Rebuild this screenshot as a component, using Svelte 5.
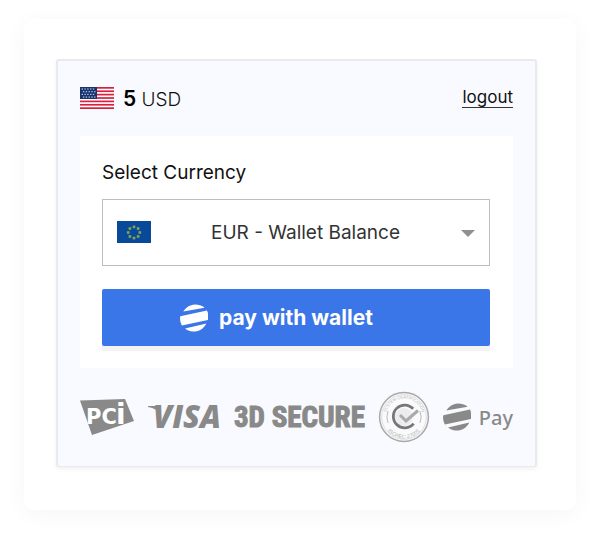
<script>
  let currency = $state('EUR');
  const stripes = [0, 2, 4, 6, 8, 10, 12];
  const unionRows = [0, 1, 2, 3];
  const unionCols = [0, 1, 2, 3, 4];
  const euStars = [0, 1, 2, 3, 4, 5, 6, 7].map((i) => ({
    x: 17 + 5.8 * Math.cos((i * Math.PI) / 4),
    y: 11.5 + 5.6 * Math.sin((i * Math.PI) / 4)
  }));
</script>

{#snippet globe()}
  <path d="M3.2 7.6A14 14 0 0 1 20 1.3Q23 2.2 24.6 3.8Z" />
  <path d="M.3 12.2L27 6.4A14 14 0 0 1 27.9 16L1.8 21.6A14 14 0 0 1 .3 12.2Z" />
  <path d="M5 24.4L26.4 19.6A14 14 0 0 1 5 24.4Z" />
{/snippet}

<main class="card">
  <section class="checkout">
    <header>
      <div class="amount">
        <svg class="flag" viewBox="0 0 34 22" role="img" aria-label="United States">
          <rect width="34" height="22" fill="#fff" />
          {#each stripes as s}
            <rect y={(s * 22) / 13} width="34" height="1.7" fill="#d5213f" />
          {/each}
          <rect width="17" height="12" fill="#17346f" />
          {#each unionRows as r}
            {#each unionCols as c}
              <rect x={1.6 + c * 2.8 + (r % 2) * 1.3} y={1.4 + r * 2.7} width="1.4" height="1.2" fill="#b9c4dc" />
            {/each}
          {/each}
        </svg>
        <span><strong>5</strong> USD</span>
      </div>
      <a href="#logout">logout</a>
    </header>

    <form class="wallet" onsubmit={(e) => e.preventDefault()}>
      <label for="currency">Select Currency</label>
      <div class="picker">
        <select id="currency" bind:value={currency}>
          <option value="EUR">EUR - Wallet Balance</option>
        </select>
        <svg class="flag picker-flag" viewBox="0 0 34 22" aria-hidden="true">
          <rect width="34" height="22" fill="#084a99" />
          {#each euStars as star}
            <rect x={star.x - 1.3} y={star.y - 1.3} width="2.6" height="2.6" fill="#86a84c" />
          {/each}
        </svg>
        <svg class="caret" viewBox="0 0 14 7" aria-hidden="true"><path d="M0 0H14L7 7Z" /></svg>
      </div>
      <button type="submit">
        <svg class="globe" viewBox="0 0 28 28" aria-hidden="true">{@render globe()}</svg>
        pay with wallet
      </button>
    </form>

    <footer>
      <svg class="pci" viewBox="0 0 54 36" role="img" aria-label="PCI">
        <path d="M0 1.5L45 0L54 22L12 36Z" />
        <text x="6" y="25" font-size="21">PC</text>
        <text x="36" y="25" font-size="28">i</text>
      </svg>
      <svg class="visa" viewBox="0 0 74 32" role="img" aria-label="VISA">
        <path d="M1 5H10L13 12Q8 7 1 6Z" />
        <text x="6" y="27" font-size="31">VISA</text>
      </svg>
      <span class="secure">3D SECURE</span>
      <svg class="seal" viewBox="0 0 52 52" role="img" aria-label="ISO/IEC 27001 certified">
        <defs>
          <path id="seal-top" d="M7.5 26A18.5 18.5 0 0 1 44.5 26" />
          <path id="seal-bottom" d="M4.5 26A21.5 21.5 0 0 0 47.5 26" />
        </defs>
        <circle cx="26" cy="26" r="24.4" fill="#fafafc" stroke="#aaa" stroke-width="1.5" />
        <circle cx="26" cy="26" r="22.3" fill="none" stroke="#ccc" stroke-width=".6" />
        <path d="M10 20A17 17 0 0 0 10 32M42 20A17 17 0 0 1 42 32" fill="none" stroke="#b4b4b4" stroke-width=".9" />
        <text font-size="4" text-anchor="middle"><textPath href="#seal-top" startOffset="50%">SYSTEM CERTIFICATION</textPath></text>
        <text font-size="5.5" text-anchor="middle"><textPath href="#seal-bottom" startOffset="50%">ISO/IEC 27001</textPath></text>
        <circle cx="26" cy="26" r="9" fill="#ececee" />
        <path d="M35.2 17.8A11.4 11.4 0 1 0 35.6 32.6" fill="none" stroke="#777" stroke-width="2.8" />
        <path d="M22 24L28 30L40 19.5" fill="none" stroke="#aaa" stroke-width="3" />
      </svg>
      <div class="pay">
        <svg class="globe" viewBox="0 0 28 28" aria-hidden="true">{@render globe()}</svg>
        <span>Pay</span>
      </div>
    </footer>
  </section>
</main>

<style>
  :global(body) {
    margin: 0;
    background: #fff;
  }
  .card,
  .card * {
    box-sizing: border-box;
  }
  .card {
    margin: 19px 24px 28px;
    padding: 40px 39px 43px 32px;
    border-radius: 10px;
    background: #fff;
    box-shadow: 0 4px 24px rgba(0, 0, 0, 0.04);
    font-family: Inter, "Noto Sans", sans-serif;
    color: #111;
  }
  .checkout {
    padding: 22px 22px 23px;
    border: 2px solid #e8eaee;
    border-bottom-width: 1px;
    border-radius: 3px;
    background: #f9faff;
    box-shadow: 0 2px 4px rgba(0, 0, 0, 0.06);
  }
  header,
  .amount,
  footer,
  .pay {
    display: flex;
    align-items: center;
  }
  header {
    justify-content: space-between;
    height: 30px;
  }
  .amount {
    gap: 9px;
    font-size: 19px;
    font-weight: 300;
  }
  strong {
    font-size: 21px;
    font-weight: 600;
    color: #000;
  }
  .flag {
    width: 34px;
    height: 22px;
    flex: none;
  }
  a {
    font-size: 17px;
    line-height: 19px;
    color: #111;
    border-bottom: 1px solid #333;
    text-decoration: none;
  }
  .wallet {
    margin-top: 23px;
    padding: 22px 23px 22px 22px;
    background: #fff;
  }
  label {
    display: block;
    font-size: 19px;
    line-height: 30px;
  }
  .picker {
    position: relative;
    margin: 11px 0 23px;
  }
  select {
    display: block;
    width: 100%;
    height: 67px;
    padding: 0 40px 0 108px;
    border: 1px solid #bdbdbd;
    border-radius: 0;
    background: #fff;
    appearance: none;
    font: 400 19px Inter, "Noto Sans", sans-serif;
    color: #333;
  }
  .picker-flag {
    position: absolute;
    left: 15px;
    top: 22px;
    pointer-events: none;
  }
  .caret {
    position: absolute;
    right: 15px;
    top: 31px;
    width: 14px;
    height: 7px;
    fill: #909090;
    pointer-events: none;
  }
  button {
    display: flex;
    align-items: center;
    justify-content: center;
    gap: 11px;
    width: 100%;
    height: 57px;
    padding: 0 39px 0 0;
    border: 0;
    border-radius: 2px;
    background: #3b76e8;
    box-shadow: 0 5px 0 #f3f3f3;
    font: 700 21px Inter, "Noto Sans", sans-serif;
    color: #fff;
  }
  .globe {
    width: 28px;
    height: 28px;
    fill: currentColor;
    flex: none;
  }
  footer {
    justify-content: space-between;
    margin-top: 23px;
    height: 52px;
    color: #898989;
    fill: #898989;
  }
  .pci {
    width: 54px;
    height: 36px;
  }
  .pci text {
    font-family: "DejaVu Sans", sans-serif;
    font-weight: 700;
    fill: #fff;
  }
  .visa {
    width: 74px;
    height: 32px;
    overflow: visible;
  }
  .visa text {
    font-family: "Open Sans", sans-serif;
    font-weight: 800;
    font-style: italic;
  }
  .secure {
    font: 700 29px "Liberation Sans Narrow", "Roboto Condensed", "Open Sans Condensed", sans-serif;
    -webkit-text-stroke: 1px #898989;
    white-space: nowrap;
  }
  .seal {
    width: 52px;
    height: 52px;
  }
  .seal text {
    font-family: "Liberation Sans", sans-serif;
    fill: #b4b4b4;
  }
  .pay {
    gap: 8px;
    font: 500 20px "Noto Sans", sans-serif;
  }
</style>
